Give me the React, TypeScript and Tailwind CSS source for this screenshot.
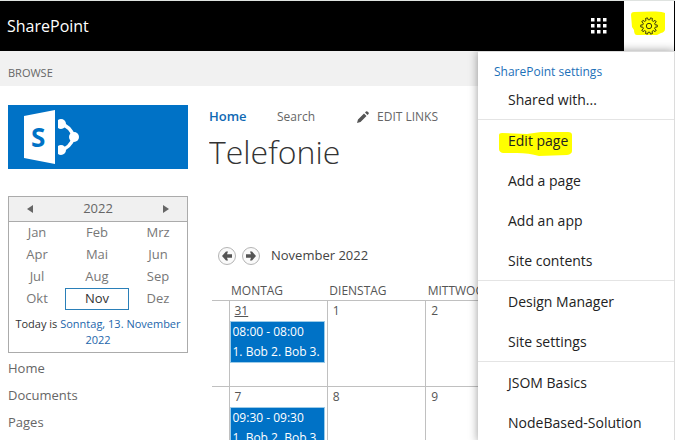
import type { ReactNode } from "react";

const months = ["Jan", "Feb", "Mrz", "Apr", "Mai", "Jun", "Jul", "Aug", "Sep", "Okt", "Nov", "Dez"];
const days = ["MONTAG", "DIENSTAG", "MITTWOCH"];
const weeks = [
  { dates: [31, 1, 2], time: "08:00 - 08:00", text: "1. Bob 2. Bob 3." },
  { dates: [7, 8, 9], time: "09:30 - 09:30", text: "1. Bob 2. Bob 3." },
];
const menuGroups = [
  ["Edit page", "Add a page", "Add an app", "Site contents"],
  ["Design Manager", "Site settings"],
  ["JSOM Basics", "NodeBased-Solution"],
];

function gearPath(teeth: number, outer: number, inner: number) {
  const step = (Math.PI * 2) / teeth;
  const points: string[] = [];
  for (let i = 0; i < teeth; i++) {
    const a = i * step + step / 2;
    [
      [inner, -0.28],
      [outer, -0.2],
      [outer, 0.2],
      [inner, 0.28],
    ].forEach(([r, t]) => {
      points.push(`${(9 + r * Math.sin(a + t * step)).toFixed(2)} ${(9 - r * Math.cos(a + t * step)).toFixed(2)}`);
    });
  }
  return `M${points.join("L")}Z`;
}

function Header() {
  return (
    <header className="relative z-10 flex h-[51px] items-stretch border-t border-[#dfe3e0] bg-black">
      <div className="flex flex-1 items-center pl-[7px] text-base text-white">SharePoint</div>
      <button aria-label="App launcher" className="flex w-[50px] items-center justify-center">
        <svg width="16" height="16" viewBox="0 0 16 16" fill="#fff">
          {[0, 6, 12].map((y) => [0, 6, 12].map((x) => <rect key={`${x}-${y}`} x={x} y={y} width="3.500" height="3.500" />))}
        </svg>
      </button>
      <button aria-label="Settings" className="relative mr-px flex w-[50px] items-center justify-center bg-white">
        <svg className="absolute left-[7px] top-[10px]" width="36" height="25" viewBox="0 0 36 25" fill="#ff0">
          <path d="M0 4Q0 1 3 1L21 0.5Q31 0 34 2V18Q34 21 30 22L26 24H6Q3 24 3 19L1 16Z" />
        </svg>
        <svg className="relative" width="18" height="18" viewBox="0 0 18 18" fill="none" stroke="#3a3a10" strokeWidth="1">
          <path d={gearPath(10, 8.3, 6.3)} strokeLinejoin="round" />
          <circle cx="9" cy="9" r="2.7" />
        </svg>
      </button>
      <SettingsMenu />
    </header>
  );
}

function SettingsMenu() {
  return (
    <nav className="absolute right-0 top-full w-[197px] border-r border-t border-[#dcdcdc] bg-white text-sm text-[#222] shadow-[0_0_9px_rgba(0,0,0,0.4)]">
      <div className="pb-[7px] pt-[10px]">
        <h2 className="pl-4 text-xs leading-5 text-[#1c70b8]">SharePoint settings</h2>
        <a href="#shared" className="flex h-[30px] items-center pl-[30px] pt-[6px]">Shared with...</a>
      </div>
      {menuGroups.map((group) => (
        <div key={group[0]} className="border-t border-[#e4e4e4]">
          {group.map((item) => (
            <a key={item} href="#item" className="relative flex h-10 items-center pb-[1px] pl-[30px] pt-[3px]">
              {item === "Edit page" && (
                <svg className="absolute left-[21px] top-3" width="73" height="24" viewBox="0 0 73 24" fill="#ff0">
                  <path d="M0 3Q0 1 3 1L28 2L42 0L69 0Q73 0 73 3V19Q73 22 68 23L40 24Q30 21 18 21L4 21Q0 20 0 17Z" />
                </svg>
              )}
              <span className="relative">{item}</span>
            </a>
          ))}
        </div>
      ))}
    </nav>
  );
}

function Logo() {
  return (
    <div className="h-16 bg-[#0072c6] pl-4">
      <svg width="56" height="64" viewBox="0 0 56 64" fill="#fff" role="img" aria-label="SharePoint">
        <path d="M0 11L31 5V59L0 53Z" />
        <text x="7" y="42" fontFamily="Open Sans, sans-serif" fontWeight="700" fontSize="26" fill="#0072c6">S</text>
        <clipPath id="nodes"><rect x="34" y="0" width="22" height="64" /></clipPath>
        <g clipPath="url(#nodes)">
          <path d="M37 19Q46 21 50 32Q46 43 37 45" fill="none" stroke="#fff" strokeWidth="3.500" />
          <circle cx="37" cy="19" r="5" />
          <circle cx="50" cy="32" r="5" />
          <circle cx="37" cy="45" r="5" />
        </g>
      </svg>
    </div>
  );
}

function MiniCalendar() {
  return (
    <section className="mb-[2px] mt-[27px] border border-[#ababab] text-[13px] text-[#777]">
      <div className="flex h-[25px] items-center justify-between border-b border-[#ababab] bg-[#f0f0f0] px-[18px]">
        <button aria-label="Previous year">
          <svg width="6" height="8" viewBox="0 0 6 8" fill="#666"><path d="M6 0V8L0 4Z" /></svg>
        </button>
        <span className="text-[#666]">2022</span>
        <button aria-label="Next year">
          <svg width="6" height="8" viewBox="0 0 6 8" fill="#666"><path d="M0 0V8L6 4Z" /></svg>
        </button>
      </div>
      <div className="grid grid-cols-[56px_1fr_58px]">
        {months.map((m) => (
          <button
            key={m}
            className={m === "Nov" ? "h-[22px] border border-[#2a7fb8] text-[#333]" : "h-[22px]"}
          >
            {m}
          </button>
        ))}
      </div>
      <p className="px-1 pb-1 pt-[6px] text-center text-[11px] leading-4 text-[#333]">
        Today is <a href="#today" className="text-[#1c66ab]">Sonntag, 13. November 2022</a>
      </p>
    </section>
  );
}

function RoundButton({ label, children }: { label: string; children: ReactNode }) {
  return (
    <button aria-label={label} className="flex size-[18px] items-center justify-center rounded-full border border-[#b4b4b4] bg-[#fafafa]">
      {children}
    </button>
  );
}

function Calendar() {
  return (
    <section className="ml-[3px] mt-[71px]">
      <div className="ml-[6px] flex h-5 items-center gap-[6px]">
        <RoundButton label="Previous month">
          <svg width="10" height="10" viewBox="0 0 10 10" fill="#555"><path d="M0 5L4 0.500H6L5 3.300H10V6.700H5L6 9.500H4Z" /></svg>
        </RoundButton>
        <RoundButton label="Next month">
          <svg width="10" height="10" viewBox="0 0 10 10" fill="#555"><path d="M10 5L6 0.500H4L5 3.300H0V6.700H5L4 9.500H6Z" /></svg>
        </RoundButton>
        <h2 className="ml-[5px] text-[13px] text-[#444]">November 2022</h2>
      </div>
      <table className="mt-4 w-[312px] table-fixed border-collapse text-xs text-[#555]">
        <thead>
          <tr>
            <th className="w-[17px]" />
            {days.map((d) => (
              <th key={d} className="h-[18px] pl-[2px] text-left font-normal">{d}</th>
            ))}
          </tr>
        </thead>
        <tbody>
          {weeks.map((w) => (
            <tr key={w.time} className="h-[86px] border-t border-[#c0c0c0]">
              <td />
              {w.dates.map((d, i) => (
                <td key={d} className="border-l border-[#c0c0c0] p-0 align-top">
                  <div className={d === 31 ? "h-5 pl-[5px] leading-5 underline" : "h-5 pl-[5px] leading-5"}>{d}</div>
                  {i === 0 && (
                    <a href="#event" className="mr-[2px] block h-[42px] overflow-hidden whitespace-nowrap border border-[#9ccbe8] bg-[#0072c6] pl-[2px] leading-5 text-white">
                      {w.time}
                      <br />
                      {w.text}
                    </a>
                  )}
                </td>
              ))}
            </tr>
          ))}
        </tbody>
      </table>
    </section>
  );
}

export default function App() {
  return (
    <div className="h-screen overflow-hidden bg-white font-['Open_Sans',sans-serif]">
      <Header />
      <div className="flex h-[35px] items-center bg-[#f1f1f1] pl-2 pt-[10px] text-[11px] text-[#666]">BROWSE</div>
      <div className="flex gap-[21px] pl-2 pt-[19px]">
        <aside className="w-[180px] shrink-0">
          <Logo />
          <MiniCalendar />
          <nav className="flex flex-col text-[13px] leading-[27px] text-[#666]">
            <a href="#home">Home</a>
            <a href="#documents">Documents</a>
            <a href="#pages">Pages</a>
          </nav>
        </aside>
        <main className="min-w-0 flex-1 overflow-hidden">
          <nav className="flex h-6 items-center text-xs text-[#666]">
            <a href="#home" className="w-[68px] text-[13px] font-semibold text-[#0f69b4]">Home</a>
            <a href="#search" className="w-20">Search</a>
            <button className="flex items-center gap-2">
              <svg width="12" height="12" viewBox="0 0 12 12" fill="#555"><path d="M0 12L1 8.500L7 2.500L9.500 5L3.500 11ZM8 1.500L9 0.500Q10 -0.300 11 1Q12.300 2 11.500 3L10.500 4Z" /></svg>
              EDIT LINKS
            </button>
          </nav>
          <h1 className="text-[32px] font-light leading-[46px] text-[#333]">Telefonie</h1>
          <Calendar />
        </main>
      </div>
    </div>
  );
}
